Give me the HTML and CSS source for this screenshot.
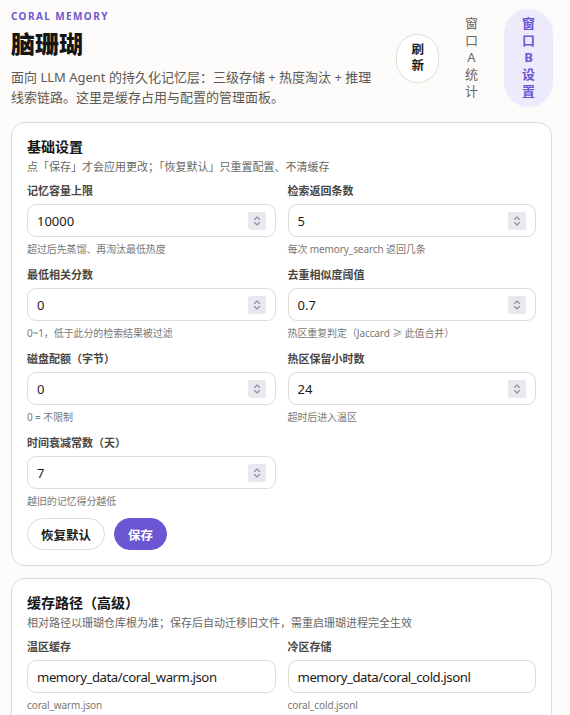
FILE: index.html
```html
<!DOCTYPE html>
<html lang="zh-CN">
<head>
<meta charset="utf-8">
<title>脑珊瑚 · 设置</title>
<link rel="stylesheet" href="styles.css">
</head>
<body>
<div class="page">
  <header class="header">
    <div class="intro">
      <div class="eyebrow">CORAL MEMORY</div>
      <h1 class="title">脑珊瑚</h1>
      <p class="lead">面向 LLM Agent 的持久化记忆层：三级存储 + 热度淘汰 + 推理线索链路。这里是缓存占用与配置的管理面板。</p>
    </div>
    <div class="actions">
      <button class="btn-refresh">刷新</button>
      <nav class="tabs">
        <button class="tab">窗口A统计</button>
        <button class="tab tab-active">窗口B设置</button>
      </nav>
    </div>
  </header>

  <section class="card">
    <h2 class="card-title">基础设置</h2>
    <p class="card-sub">点「保存」才会应用更改；「恢复默认」只重置配置、不清缓存</p>
    <div class="fields">
      <div class="field">
        <label class="label">记忆容量上限</label>
        <div class="input-box">
          <input class="input" type="text" value="10000">
          <span class="spin"><svg viewBox="0 0 18 18" width="18" height="18"><path d="M6.5 7.5 9 5l2.5 2.5M6.5 10.5 9 13l2.5-2.5" fill="none" stroke="#8d8c99" stroke-width="1.1" stroke-linecap="round" stroke-linejoin="round"/></svg></span>
        </div>
        <div class="help">超过后先蒸馏、再淘汰最低热度</div>
      </div>
      <div class="field">
        <label class="label">检索返回条数</label>
        <div class="input-box">
          <input class="input" type="text" value="5">
          <span class="spin"><svg viewBox="0 0 18 18" width="18" height="18"><path d="M6.5 7.5 9 5l2.5 2.5M6.5 10.5 9 13l2.5-2.5" fill="none" stroke="#8d8c99" stroke-width="1.1" stroke-linecap="round" stroke-linejoin="round"/></svg></span>
        </div>
        <div class="help">每次 memory_search 返回几条</div>
      </div>
      <div class="field">
        <label class="label">最低相关分数</label>
        <div class="input-box">
          <input class="input" type="text" value="0">
          <span class="spin"><svg viewBox="0 0 18 18" width="18" height="18"><path d="M6.5 7.5 9 5l2.5 2.5M6.5 10.5 9 13l2.5-2.5" fill="none" stroke="#8d8c99" stroke-width="1.1" stroke-linecap="round" stroke-linejoin="round"/></svg></span>
        </div>
        <div class="help">0~1，低于此分的检索结果被过滤</div>
      </div>
      <div class="field">
        <label class="label">去重相似度阈值</label>
        <div class="input-box">
          <input class="input" type="text" value="0.7">
          <span class="spin"><svg viewBox="0 0 18 18" width="18" height="18"><path d="M6.5 7.5 9 5l2.5 2.5M6.5 10.5 9 13l2.5-2.5" fill="none" stroke="#8d8c99" stroke-width="1.1" stroke-linecap="round" stroke-linejoin="round"/></svg></span>
        </div>
        <div class="help">热区重复判定（Jaccard ≥ 此值合并）</div>
      </div>
      <div class="field">
        <label class="label">磁盘配额（字节）</label>
        <div class="input-box">
          <input class="input" type="text" value="0">
          <span class="spin"><svg viewBox="0 0 18 18" width="18" height="18"><path d="M6.5 7.5 9 5l2.5 2.5M6.5 10.5 9 13l2.5-2.5" fill="none" stroke="#8d8c99" stroke-width="1.1" stroke-linecap="round" stroke-linejoin="round"/></svg></span>
        </div>
        <div class="help">0 = 不限制</div>
      </div>
      <div class="field">
        <label class="label">热区保留小时数</label>
        <div class="input-box">
          <input class="input" type="text" value="24">
          <span class="spin"><svg viewBox="0 0 18 18" width="18" height="18"><path d="M6.5 7.5 9 5l2.5 2.5M6.5 10.5 9 13l2.5-2.5" fill="none" stroke="#8d8c99" stroke-width="1.1" stroke-linecap="round" stroke-linejoin="round"/></svg></span>
        </div>
        <div class="help">超时后进入温区</div>
      </div>
      <div class="field">
        <label class="label">时间衰减常数（天）</label>
        <div class="input-box">
          <input class="input" type="text" value="7">
          <span class="spin"><svg viewBox="0 0 18 18" width="18" height="18"><path d="M6.5 7.5 9 5l2.5 2.5M6.5 10.5 9 13l2.5-2.5" fill="none" stroke="#8d8c99" stroke-width="1.1" stroke-linecap="round" stroke-linejoin="round"/></svg></span>
        </div>
        <div class="help">越旧的记忆得分越低</div>
      </div>
    </div>
    <div class="buttons">
      <button class="btn btn-ghost">恢复默认</button>
      <button class="btn btn-primary">保存</button>
    </div>
  </section>

  <section class="card">
    <h2 class="card-title">缓存路径（高级）</h2>
    <p class="card-sub">相对路径以珊瑚仓库根为准；保存后自动迁移旧文件，需重启珊瑚进程完全生效</p>
    <div class="fields">
      <div class="field">
        <label class="label">温区缓存</label>
        <div class="input-box">
          <input class="input input-path" type="text" value="memory_data/coral_warm.json">
        </div>
        <div class="help">coral_warm.json</div>
      </div>
      <div class="field">
        <label class="label">冷区存储</label>
        <div class="input-box">
          <input class="input input-path" type="text" value="memory_data/coral_cold.jsonl">
        </div>
        <div class="help">coral_cold.jsonl</div>
      </div>
    </div>
  </section>
</div>
</body>
</html>
```

FILE: styles.css
```css
* { box-sizing: border-box; }

html, body {
  margin: 0;
  background: #fcfbf9;
}

body {
  font-family: "Noto Sans", "Noto Sans CJK SC", sans-serif;
  color: #1c1b1a;
}

.page {
  padding: 9px 18px 0 11px;
  display: flex;
  flex-direction: column;
  gap: 12px;
}

/* ---------- header ---------- */
.header {
  display: flex;
  align-items: center;
  gap: 16px;
  margin-right: -1px;
  margin-bottom: 3px;
}

.intro {
  flex: 1;
  min-width: 0;
}

.eyebrow {
  font-size: 10px;
  line-height: 14px;
  font-weight: 700;
  letter-spacing: 1.4px;
  color: #6b59d3;
}

.title {
  margin: 6px 0 0;
  font-size: 24px;
  line-height: 30px;
  font-weight: 800;
  color: #161514;
}

.lead {
  margin: 8px 0 0;
  font-size: 13px;
  line-height: 20px;
  color: #5d5a55;
}

.actions {
  display: flex;
  align-items: center;
  gap: 8px;
}

.tabs {
  display: flex;
  align-items: center;
  gap: 8px;
}

button {
  font-family: inherit;
  cursor: pointer;
}

.btn-refresh {
  width: min-content;
  padding: 7px 14px;
  font-size: 12.5px;
  line-height: 16.5px;
  font-weight: 700;
  color: #1c1b1a;
  background: #fff;
  border: 1px solid #e0dcd4;
  border-radius: 999px;
}

.tab {
  width: min-content;
  padding: 6px 18px 7px;
  font-size: 13px;
  line-height: 17px;
  color: #6a6762;
  background: transparent;
  border: 0;
  border-radius: 999px;
}

.tab-active {
  background: #edeafb;
  color: #6b59d3;
  font-weight: 700;
}

/* ---------- cards ---------- */
.card {
  background: #fff;
  border: 1px solid #e0dcd4;
  border-radius: 14px;
  padding: 14px 15px 15px;
}

.card-title {
  margin: 0;
  font-size: 14px;
  line-height: 20px;
  font-weight: 700;
  color: #161514;
}

.card-sub {
  margin: 2px 0 0;
  font-size: 11px;
  line-height: 16px;
  color: #6a6762;
}

.fields {
  margin-top: 8px;
  display: grid;
  grid-template-columns: 1fr 1fr;
  column-gap: 12px;
  row-gap: 11px;
}

.field {
  display: flex;
  flex-direction: column;
}

.label {
  font-size: 11px;
  line-height: 16px;
  font-weight: 700;
  color: #4a4743;
}

.input-box {
  margin-top: 5px;
  height: 33px;
  display: flex;
  align-items: center;
  border: 1px solid #e0dcd4;
  border-radius: 9px;
  background: #fff;
  padding: 0 9px 0 9px;
}

.input {
  flex: 1;
  min-width: 0;
  border: 0;
  outline: 0;
  padding: 0;
  background: transparent;
  font-family: "Noto Sans", "Noto Sans CJK SC", sans-serif;
  font-size: 13px;
  color: #1c1b1a;
}

/* file paths: slightly tighter tracking */
.input-path {
  font-size: 13.2px;
  letter-spacing: -0.45px;
}

.spin {
  display: flex;
  width: 18px;
  height: 18px;
  background: #e9e8ee;
  border-radius: 2px;
}

.help {
  margin-top: 5px;
  font-size: 10px;
  line-height: 14px;
  color: #7b7873;
  letter-spacing: -0.1px;
}

/* ---------- action buttons ---------- */
.buttons {
  margin-top: 10px;
  display: flex;
  gap: 9px;
}

.btn {
  height: 32px;
  padding: 0 13px;
  font-size: 12.5px;
  font-weight: 700;
  border-radius: 999px;
}

.btn-ghost {
  background: #fff;
  color: #1c1b1a;
  border: 1px solid #e0dcd4;
}

.btn-primary {
  background: #6a56d2;
  color: #fff;
  border: 1px solid #6a56d2;
}
```
